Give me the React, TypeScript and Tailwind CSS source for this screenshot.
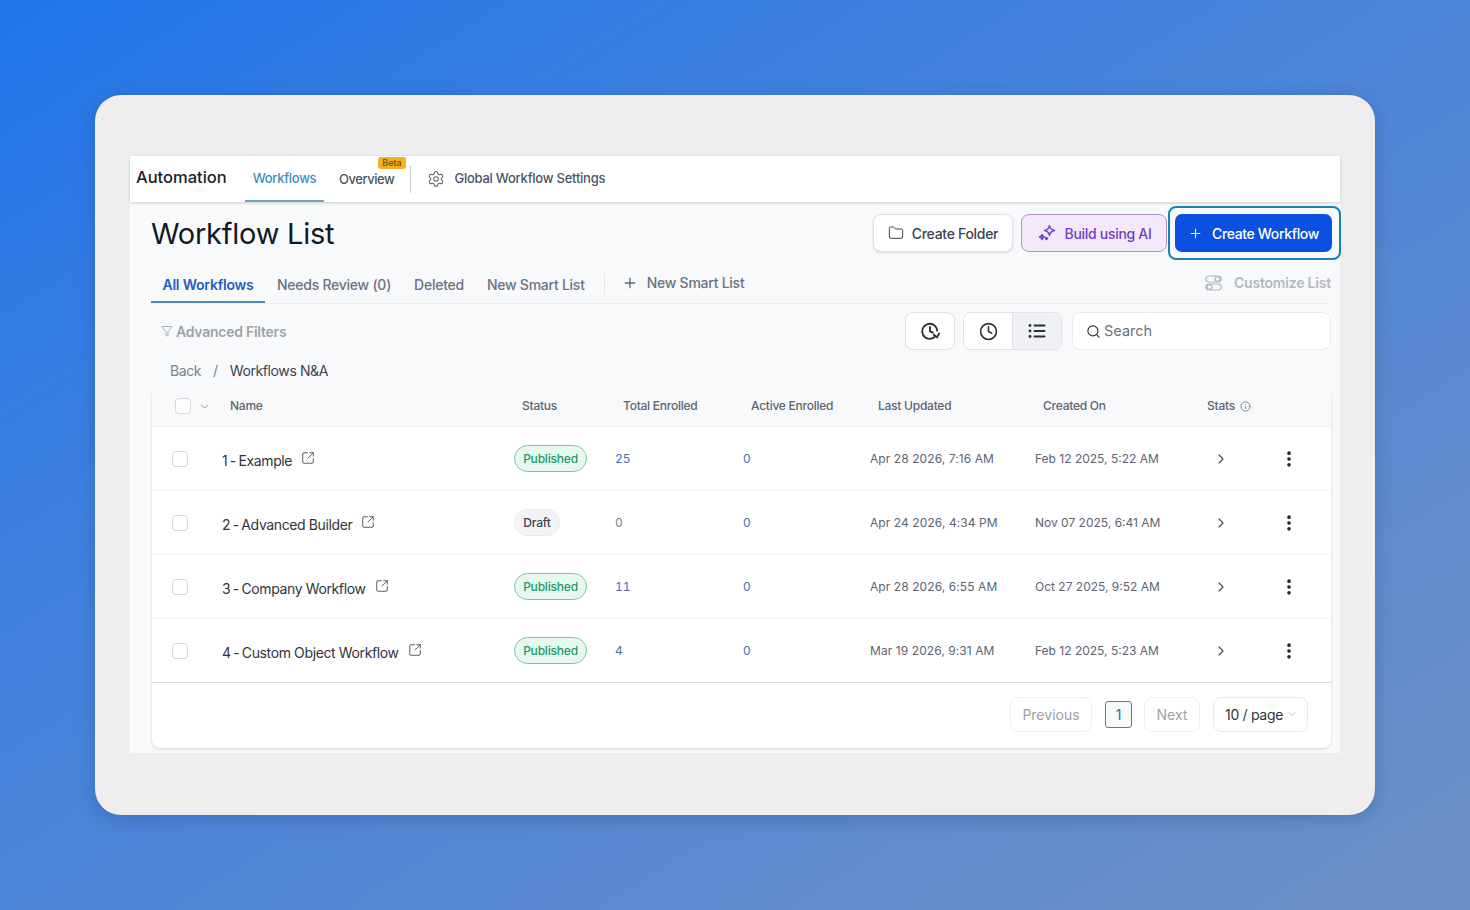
import { ChevronDown, ChevronRight, Clock, Filter, Folder, Info, MoreVertical, Plus, Search, Settings, SquareArrowOutUpRight } from "lucide-react";

const rows = [
  { prefix: "1 - ", name: "Example", status: "Published", total: "25", updated: "Apr 28 2026, 7:16 AM", created: "Feb 12 2025, 5:22 AM" },
  { prefix: "2 - ", name: "Advanced Builder", status: "Draft", total: "0", updated: "Apr 24 2026, 4:34 PM", created: "Nov 07 2025, 6:41 AM" },
  { prefix: "3 - ", name: "Company Workflow", status: "Published", total: "11", updated: "Apr 28 2026, 6:55 AM", created: "Oct 27 2025, 9:52 AM" },
  { prefix: "4 - ", name: "Custom Object Workflow", status: "Published", total: "4", updated: "Mar 19 2026, 9:31 AM", created: "Feb 12 2025, 5:23 AM" },
];

const grid = "grid grid-cols-[70px_292px_101px_128px_127px_165px_172px_82px_42px] items-center";

function Toggles() {
  return (
    <svg width="17" height="16" viewBox="0 0 17 16" fill="none" stroke="#b3b8c0" strokeWidth="1.2">
      <rect x="0.8" y="1" width="15.4" height="6" rx="3" />
      <rect x="0.8" y="9" width="15.4" height="6" rx="3" />
      <circle cx="12.5" cy="4" r="2.4" />
      <circle cx="4.5" cy="12" r="2.4" />
    </svg>
  );
}

function HistoryIcon() {
  return (
    <svg width="20" height="20" viewBox="0 0 24 24" fill="none" stroke="#2a2f38" strokeWidth="2.2" strokeLinecap="round" strokeLinejoin="round">
      <path d="M20.6 11.5A9 9 0 1 0 17.5 19.2" />
      <path d="M12 7v5.5l3.5 1.5" />
      <path d="M23 15l-2.6 4.6L16.5 16.5" />
    </svg>
  );
}

function ListIcon() {
  return (
    <svg width="20" height="20" viewBox="0 0 20 20" fill="none" stroke="#2a2f38" strokeWidth="2" strokeLinecap="round">
      <path d="M7.5 4.5H17.5M7.5 10H17.5M7.5 15.5H17.5" />
      <circle cx="3" cy="4.5" r="1.4" fill="#2a2f38" stroke="none" />
      <circle cx="3" cy="10" r="1.4" fill="#2a2f38" stroke="none" />
      <circle cx="3" cy="15.5" r="1.4" fill="#2a2f38" stroke="none" />
    </svg>
  );
}

function SparkleIcon() {
  return (
    <svg width="20" height="20" viewBox="0 0 20 20" fill="none" stroke="#6b3fc4" strokeWidth="1.5" strokeLinejoin="round">
      <path d="M12.5 2.5C13 5.5 14 6.8 17.5 7.5C14 8.2 13 9.5 12.5 12.5C12 9.5 11 8.2 7.5 7.5C11 6.8 12 5.5 12.5 2.5Z" />
      <path d="M5 11.5C5.3 13 6 13.7 7.5 14C6 14.3 5.3 15 5 16.5C4.7 15 4 14.3 2.5 14C4 13.7 4.7 13 5 11.5Z" />
      <path d="M9.5 14.5L10.5 15.5L9.5 16.5L8.5 15.5Z" />
    </svg>
  );
}

export default function App() {
  return (
    <div className="h-[910px] w-full overflow-hidden flex items-center justify-center bg-gradient-to-br from-[#1f76ea] to-[#6f90c4] font-['Inter',sans-serif]">
      <div className="w-[1280px] h-[720px] rounded-[26px] bg-[#eeeeee] pt-[61px] px-[35px] shadow-[0_4px_16px_rgba(20,50,100,0.25)]">
        <div className="w-[1210px] h-[597px] bg-[#f8f9fb] flex flex-col">
          {/* top nav */}
          <div className="h-[46px] bg-white shadow-[0_1px_3px_rgba(0,0,0,0.18)] flex items-center relative shrink-0">
            <span className="ml-[6px] text-[16.5px] font-medium text-[#1a1f2b] w-[109px] -mt-[3px]">Automation</span>
            <div className="h-full w-[79px] flex items-center justify-center text-[13px] font-medium text-[#3b8fc0] border-b-2 border-[#6ea3bd] tracking-[-0.3px] pt-[1px]">Workflows</div>
            <div className="relative ml-[15px] text-[13px] font-medium text-[#4b5563] tracking-[-0.45px] pt-[1px]">
              Overview
              <span className="absolute -top-[12px] left-[39px] w-[28px] h-[12px] rounded-[3px] bg-[#f5b11f] text-[9px] leading-[12px] text-center text-[#6b4a00] tracking-normal">Beta</span>
            </div>
            <div className="ml-[16px] h-[27px] w-px bg-[#c9ced6]" />
            <Settings className="ml-[16px] w-[18px] h-[18px] text-[#565d69]" strokeWidth={1.4} />
            <span className="ml-[9px] text-[13px] font-medium text-[#4b5563] tracking-[-0.24px]">Global Workflow Settings</span>
          </div>

          {/* title row */}
          <div className="h-[62px] pl-[21px] -mr-[1px] flex items-center justify-between shrink-0">
            <h1 className="text-[29px] font-normal text-[#14181f] tracking-[-0.25px] mt-[1px]">Workflow List</h1>
            <div className="flex items-center">
              <button className="w-[140px] h-[38px] rounded-[8px] bg-white border border-[#dfe2e7] shadow-sm flex items-center justify-center gap-[8px] text-[14px] font-medium text-[#3d4450] tracking-[-0.3px]">
                <Folder className="w-[16px] h-[16px]" strokeWidth={1.5} />
                Create Folder
              </button>
              <button className="ml-[8px] w-[146px] h-[38px] rounded-[8px] bg-[#f4e9fb] border border-[#b592cf] flex items-center justify-center gap-[8px] text-[14px] font-medium text-[#6b3fc4] tracking-[-0.3px]">
                <SparkleIcon />
                Build using AI
              </button>
              <div className="ml-[1px] w-[173px] h-[54px] rounded-[8px] border-2 border-[#1583b8] flex items-center pl-[5px]">
                <button className="w-[157px] h-[38px] rounded-[7px] bg-[#0b50e0] flex items-center justify-center gap-[9px] text-[14px] font-medium text-white tracking-[-0.35px]">
                  <Plus className="w-[15px] h-[15px]" strokeWidth={1.6} />
                  Create Workflow
                </button>
              </div>
            </div>
          </div>

          {/* tabs */}
          <div className="ml-[21px] mr-[9px] h-[40px] flex items-center border-b border-[#eceef1] relative shrink-0">
            <div className="h-full w-[114px] flex items-center justify-center text-[14px] font-semibold text-[#1d5fc4] border-b-2 border-[#4f8db5] tracking-[-0.2px] pt-[3px]">All Workflows</div>
            <span className="ml-[12px] text-[14px] font-medium text-[#6b7280] tracking-[-0.25px] pt-[2px]">Needs Review (0)</span>
            <span className="ml-[23px] text-[14px] font-medium text-[#6b7280] tracking-[-0.25px] pt-[2px]">Deleted</span>
            <span className="ml-[23px] text-[14px] font-medium text-[#6b7280] tracking-[-0.25px] pt-[2px]">New Smart List</span>
            <div className="ml-[19px] h-[22px] w-px bg-[#e3e5e9]" />
            <Plus className="ml-[17px] w-[16px] h-[16px] text-[#5d6470] -mt-[2px]" strokeWidth={1.9} />
            <span className="ml-[9px] text-[14px] font-medium text-[#6b7280] tracking-[-0.25px] -mt-[2px]">New Smart List</span>
            <div className="ml-auto flex items-center gap-[12px] -mt-[2px]">
              <Toggles />
              <span className="text-[14px] font-semibold text-[#b3b8c0] tracking-[-0.2px]">Customize List</span>
            </div>
          </div>

          {/* filter row */}
          <div className="h-[54px] pl-[31px] pr-[9px] flex items-center shrink-0">
            <Filter className="w-[12px] h-[12px] text-[#8d939c]" strokeWidth={1.5} />
            <span className="ml-[3px] text-[14px] font-semibold text-[#9ca2ab] tracking-[-0.25px]">Advanced Filters</span>
            <div className="ml-auto flex items-center">
              <button className="w-[50px] h-[38px] rounded-[8px] bg-white border border-[#dfe2e7] flex items-center justify-center">
                <HistoryIcon />
              </button>
              <div className="ml-[8px] w-[99px] h-[38px] rounded-[8px] border border-[#dfe2e7] flex overflow-hidden">
                <div className="w-[48px] bg-white flex items-center justify-center text-[#2a2f38]">
                  <Clock className="w-[19px] h-[19px]" strokeWidth={2} />
                </div>
                <div className="flex-1 bg-[#f0f1f4] border-l border-[#dfe2e7] flex items-center justify-center">
                  <ListIcon />
                </div>
              </div>
              <div className="ml-[10px] w-[259px] h-[38px] rounded-[8px] bg-white border border-[#e8eaee] flex items-center pl-[13px] text-[#6b7280]">
                <Search className="w-[15px] h-[15px] text-[#2a2f38]" strokeWidth={1.8} />
                <span className="ml-[3px] text-[14.5px]">Search</span>
              </div>
            </div>
          </div>

          {/* breadcrumb */}
          <div className="h-[25px] pl-[40px] flex items-center text-[14px] shrink-0 tracking-[-0.4px]">
            <span className="text-[#7c828c]">Back</span>
            <span className="ml-[12px] text-[#7c828c]">/</span>
            <span className="ml-[12px] text-[#3d4450]">Workflows N&amp;A</span>
          </div>

          {/* table */}
          <div className="ml-[22px] w-[1179px] h-[360px] mt-[5px] rounded-[8px] bg-white shadow-[0_1px_3px_rgba(0,0,0,0.16)] flex flex-col overflow-hidden shrink-0">
            <div className={`${grid} h-[39px] pb-[2px] bg-[#f8f9fb] border-b border-[#eceef1] text-[12px] font-medium text-[#5d6470] tracking-[-0.25px] shrink-0`}>
              <div className="flex items-center pl-[23px]">
                <span className="w-[16px] h-[16px] rounded-[4px] border border-[#d5d8de] bg-white" />
                <ChevronDown className="ml-[7px] w-[13px] h-[13px] text-[#7c828c]" strokeWidth={1.5} />
              </div>
              <div className="pl-[8px]">Name</div>
              <div className="pl-[8px]">Status</div>
              <div className="pl-[8px]">Total Enrolled</div>
              <div className="pl-[8px]">Active Enrolled</div>
              <div className="pl-[8px]">Last Updated</div>
              <div className="pl-[8px]">Created On</div>
              <div className="flex items-center gap-[5px]">
                Stats
                <Info className="w-[11px] h-[11px]" strokeWidth={1.6} />
              </div>
              <div />
            </div>
            {rows.map((r, i) => (
              <div key={r.name} className={`${grid} h-[64px] ${i === 3 ? "border-b border-[#d9dce1]" : "border-b border-[#f0f1f3]"} shrink-0`}>
                <div className="pl-[20px]">
                  <span className="block w-[16px] h-[16px] rounded-[4px] border border-[#d5d8de] bg-white" />
                </div>
                <div className="flex items-center text-[14px] text-[#2f3540]">
                  <span className="mt-[4px] tracking-[-0.38px] whitespace-pre">
                    <span className="[word-spacing:-1px]">{r.prefix}</span>
                    {r.name}
                  </span>
                  <SquareArrowOutUpRight className="ml-[9px] w-[14px] h-[14px] text-[#4b5563] -mt-[2px]" strokeWidth={1.6} />
                </div>
                <div>
                  {r.status === "Published" ? (
                    <span className="inline-flex items-center justify-center w-[73px] h-[27px] rounded-full bg-[#e6f8f0] border border-[#6fcaa6] text-[12px] font-medium text-[#1c9a6b] tracking-[-0.2px]">Published</span>
                  ) : (
                    <span className="inline-flex items-center justify-center w-[46px] h-[27px] rounded-full bg-[#f3f4f6] border border-[#e8eaee] text-[12px] font-medium text-[#3d4450] tracking-[-0.2px]">Draft</span>
                  )}
                </div>
                <div className={`text-[12px] tabular-nums ${r.total === "0" ? "text-[#7c828c]" : "text-[#4a6bb8]"}`}>{r.total}</div>
                <div className="text-[12px] text-[#4a6bb8]">0</div>
                <div className="text-[12px] text-[#5d6470] tracking-[0.08px]">{r.updated}</div>
                <div className="text-[12px] text-[#5d6470]">{r.created}</div>
                <div className="pl-[6px]">
                  <ChevronRight className="w-[16px] h-[16px] text-[#3d4450]" strokeWidth={1.6} />
                </div>
                <div className="-ml-[10px]">
                  <MoreVertical className="w-[20px] h-[20px] text-[#1f242d]" strokeWidth={2.4} />
                </div>
              </div>
            ))}
            <div className="flex-1 flex items-center justify-end pr-[23px] pb-[3px]">
              <button className="w-[82px] h-[35px] rounded-[8px] border border-[#eef0f2] text-[14px] text-[#9ca2ab]">Previous</button>
              <button className="ml-[13px] w-[27px] h-[27px] rounded-[3px] border border-[#4f8299] bg-[#f6fafb] text-[14px] text-[#3b6f8c]">1</button>
              <button className="ml-[12px] w-[56px] h-[35px] rounded-[8px] border border-[#eef0f2] text-[14px] text-[#9ca2ab]">Next</button>
              <div className="ml-[13px] w-[95px] h-[35px] rounded-[8px] border border-[#e8eaee] flex items-center pl-[11px] text-[14px] text-[#2f3540] tracking-[-0.3px]">
                10 / page
                <ChevronDown className="ml-[3px] w-[12px] h-[12px] text-[#a8adb5]" strokeWidth={1.5} />
              </div>
            </div>
          </div>
        </div>
      </div>
    </div>
  );
}
